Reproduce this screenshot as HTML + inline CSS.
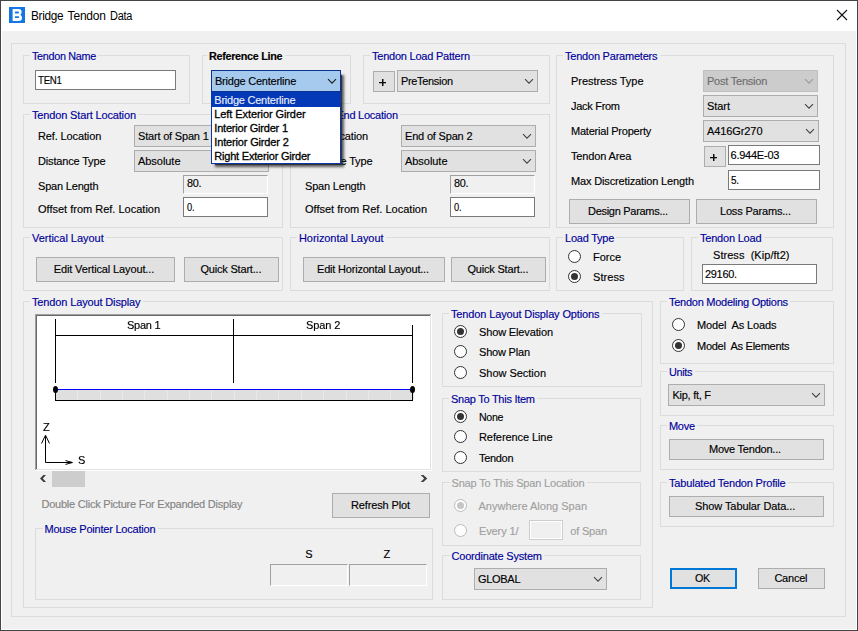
<!DOCTYPE html>
<html><head><meta charset="utf-8"><title>Bridge Tendon Data</title>
<style>
html,body{margin:0;padding:0;}
body{width:858px;height:631px;overflow:hidden;background:#f0f0f0;font-family:"Liberation Sans",sans-serif;font-size:11px;position:relative;}
#w{position:absolute;left:0;top:0;width:858px;height:631px;overflow:hidden;background:#f0f0f0;}
#w div,#w span,#w svg,#w i{position:absolute;box-sizing:content-box;}
.t{white-space:pre;font-family:"Liberation Sans",sans-serif;-webkit-text-stroke:0.15px currentColor;}
.g{border:1px solid #dcdcdc;}
.gp{height:5px;background:#f0f0f0;}
.cb{background:#e1e1e1;border:1px solid #adadad;}
.cbd{background:#cccccc;border-color:#bfbfbf;}
.cba{background:#a5caee;border-color:#0b3193;}
.bt{background:#e1e1e1;border:1px solid #adadad;}
.btd{border:2px solid #0078d7;}
.tb{background:#fff;border:1px solid #7a7a7a;}
.tbr{background:#f0f0f0;border:1px solid;border-color:#a0a0a0 #fff #fff #a0a0a0;}
.tbx{background:#f0f0f0;border:1px solid #cdcdcd;box-shadow:inset 0 0 0 1px #fff;}
.rd{width:11px;height:11px;border:1px solid #333;border-radius:50%;background:#fff;}
.rd i{left:2px;top:2px;width:7px;height:7px;border-radius:50%;background:#333;}
.rdd{border-color:#bcbcbc;background:#fdfdfd;}
.rdd i{background:#c6c6c6;}
.ln{background:#000;}
</style></head><body><div id="w">
<div style="left:0;top:0;width:858px;height:31px;background:#fff"></div>
<div style="left:9px;top:7px;width:16px;height:16px;background:#1476e3"></div>
<svg class="a" style="left:9px;top:7px" width="16" height="16" viewBox="0 0 16 16"><path fill="#fff" fill-rule="evenodd" d="M3.6 2H9.8Q12.6 2 12.6 5Q12.6 7 11.4 7.700Q13 8.500 13 10.700Q13 14 9.800 14H3.600ZM6 4.500H9Q10 4.500 10 5.450Q10 6.400 9 6.400H6ZM6 9.200H9.300Q10.200 9.200 10.200 10.050Q10.200 10.900 9.300 10.900H6Z"/></svg>
<span class="t" style="left:30.6px;top:9px;font-size:12px;line-height:14px;color:#000;letter-spacing:-0.300px;transform:scaleX(0.9823);transform-origin:0 0;-webkit-text-stroke:0;">Bridge</span>
<span class="t" style="left:67.6px;top:9px;font-size:12px;line-height:14px;color:#000;letter-spacing:-0.193px;-webkit-text-stroke:0;">Tendon</span>
<span class="t" style="left:110.2px;top:9px;font-size:12px;line-height:14px;color:#000;letter-spacing:-0.300px;transform:scaleX(0.9122);transform-origin:0 0;-webkit-text-stroke:0;">Data</span>
<svg class="a" style="left:836px;top:9px" width="12" height="12" viewBox="0 0 12 12"><path d="M1 1 L11 11 M11 1 L1 11" stroke="#111" stroke-width="1.1" fill="none"/></svg>
<div class="g" style="left:11px;top:43px;width:833px;height:572px"></div>
<div class="g" style="left:23px;top:55px;width:165px;height:47px"></div>
<div class="gp" style="left:30px;top:54px;width:68.25px"></div>
<span class="t" style="left:32px;top:50px;font-size:11px;line-height:13px;color:#00009b;letter-spacing:-0.300px;transform:scaleX(0.9812);transform-origin:0 0;">Tendon Name</span>
<div class="tb" style="left:35px;top:70px;width:139px;height:18px"></div>
<span class="t" style="left:38px;top:74px;font-size:11px;line-height:13px;color:#000;letter-spacing:-0.300px;transform:scaleX(0.8818);transform-origin:0 0;">TEN1</span>
<div class="g" style="left:363px;top:55px;width:185px;height:47px"></div>
<div class="gp" style="left:370px;top:54px;width:102px"></div>
<span class="t" style="left:372px;top:50px;font-size:11px;line-height:13px;color:#00009b;letter-spacing:-0.230px;">Tendon Load Pattern</span>
<div class="bt" style="left:373px;top:71px;width:20px;height:19px"></div>
<div style="left:379px;top:82px;width:7px;height:1px;background:#0c0c0c"></div>
<div style="left:382px;top:79px;width:1px;height:7px;background:#0c0c0c"></div>
<div style="left:383px;top:79px;width:1px;height:7px;background:rgba(0,0,0,.45)"></div>
<div style="left:379px;top:83px;width:7px;height:1px;background:rgba(0,0,0,.25)"></div>
<div class="cb" style="left:397px;top:70px;width:139px;height:20px"></div>
<span class="t" style="left:401px;top:75px;font-size:11px;line-height:13px;color:#000;letter-spacing:-0.300px;transform:scaleX(0.9937);transform-origin:0 0;">PreTension</span>
<svg class="a" style="left:524px;top:78.1px" width="10" height="7" viewBox="0 0 10 7"><path d="M1 1.2 L5 5.2 L9 1.2" fill="none" stroke="#404040" stroke-width="1.05"/></svg>
<div class="g" style="left:556px;top:55px;width:276px;height:171px"></div>
<div class="gp" style="left:563px;top:54px;width:96.5px"></div>
<span class="t" style="left:565px;top:50px;font-size:11px;line-height:13px;color:#00009b;letter-spacing:-0.218px;">Tendon Parameters</span>
<span class="t" style="left:571px;top:75px;font-size:11px;line-height:13px;color:#000;letter-spacing:-0.051px;">Prestress Type</span>
<span class="t" style="left:571px;top:100px;font-size:11px;line-height:13px;color:#000;letter-spacing:-0.292px;">Jack From</span>
<span class="t" style="left:571px;top:125px;font-size:11px;line-height:13px;color:#000;letter-spacing:-0.219px;">Material Property</span>
<span class="t" style="left:571px;top:150px;font-size:11px;line-height:13px;color:#000;letter-spacing:-0.152px;">Tendon Area</span>
<span class="t" style="left:571px;top:175px;font-size:11px;line-height:13px;color:#000;letter-spacing:-0.148px;">Max Discretization Length</span>
<div class="cb cbd" style="left:703px;top:70px;width:113px;height:20px"></div>
<span class="t" style="left:707px;top:75px;font-size:11px;line-height:13px;color:#6d6d6d;letter-spacing:-0.230px;">Post Tension</span>
<svg class="a" style="left:804px;top:78.1px" width="10" height="7" viewBox="0 0 10 7"><path d="M1 1.2 L5 5.2 L9 1.2" fill="none" stroke="#9a9a9a" stroke-width="1.05"/></svg>
<div class="cb" style="left:703px;top:95px;width:113px;height:20px"></div>
<span class="t" style="left:707px;top:100px;font-size:11px;line-height:13px;color:#000;letter-spacing:-0.057px;">Start</span>
<svg class="a" style="left:804px;top:103.1px" width="10" height="7" viewBox="0 0 10 7"><path d="M1 1.2 L5 5.2 L9 1.2" fill="none" stroke="#404040" stroke-width="1.05"/></svg>
<div class="cb" style="left:703px;top:120px;width:114px;height:20px"></div>
<span class="t" style="left:707px;top:125px;font-size:11px;line-height:13px;color:#000;letter-spacing:-0.095px;">A416Gr270</span>
<svg class="a" style="left:805px;top:128.1px" width="10" height="7" viewBox="0 0 10 7"><path d="M1 1.2 L5 5.2 L9 1.2" fill="none" stroke="#404040" stroke-width="1.05"/></svg>
<div class="bt" style="left:704px;top:146px;width:20px;height:19px"></div>
<div style="left:710px;top:157px;width:7px;height:1px;background:#0c0c0c"></div>
<div style="left:713px;top:154px;width:1px;height:7px;background:#0c0c0c"></div>
<div style="left:714px;top:154px;width:1px;height:7px;background:rgba(0,0,0,.45)"></div>
<div style="left:710px;top:158px;width:7px;height:1px;background:rgba(0,0,0,.25)"></div>
<div class="tb" style="left:728px;top:145px;width:90px;height:18px"></div>
<span class="t" style="left:730.5px;top:149px;font-size:11px;line-height:13px;color:#000;letter-spacing:-0.232px;">6.944E-03</span>
<div class="tb" style="left:728px;top:170px;width:90px;height:18px"></div>
<span class="t" style="left:731px;top:174px;font-size:11px;line-height:13px;color:#000;letter-spacing:-0.300px;transform:scaleX(0.9016);transform-origin:0 0;">5.</span>
<div class="bt" style="left:569px;top:199px;width:119px;height:23px"></div>
<span class="t" style="left:588px;top:205px;font-size:11px;line-height:13px;color:#000;letter-spacing:-0.291px;">Design Params...</span>
<div class="bt" style="left:696px;top:199px;width:119px;height:23px"></div>
<span class="t" style="left:720px;top:205px;font-size:11px;line-height:13px;color:#000;letter-spacing:-0.181px;">Loss Params...</span>
<div class="g" style="left:23px;top:114px;width:258px;height:112px"></div>
<div class="gp" style="left:30px;top:113px;width:108px"></div>
<span class="t" style="left:32px;top:109px;font-size:11px;line-height:13px;color:#00009b;letter-spacing:-0.151px;">Tendon Start Location</span>
<span class="t" style="left:38px;top:130px;font-size:11px;line-height:13px;color:#000;letter-spacing:-0.130px;">Ref. Location</span>
<span class="t" style="left:38px;top:155px;font-size:11px;line-height:13px;color:#000;letter-spacing:-0.167px;">Distance Type</span>
<span class="t" style="left:38px;top:180px;font-size:11px;line-height:13px;color:#000;letter-spacing:-0.189px;">Span Length</span>
<span class="t" style="left:38px;top:203px;font-size:11px;line-height:13px;color:#000;">Offset from Ref. Location</span>
<div class="cb" style="left:134px;top:125px;width:133px;height:20px"></div>
<span class="t" style="left:138px;top:130px;font-size:11px;line-height:13px;color:#000;letter-spacing:-0.188px;">Start of Span 1</span>
<svg class="a" style="left:255px;top:133.1px" width="10" height="7" viewBox="0 0 10 7"><path d="M1 1.2 L5 5.2 L9 1.2" fill="none" stroke="#404040" stroke-width="1.05"/></svg>
<div class="cb" style="left:134px;top:150px;width:133px;height:20px"></div>
<span class="t" style="left:138px;top:155px;font-size:11px;line-height:13px;color:#000;letter-spacing:-0.044px;">Absolute</span>
<svg class="a" style="left:255px;top:158.1px" width="10" height="7" viewBox="0 0 10 7"><path d="M1 1.2 L5 5.2 L9 1.2" fill="none" stroke="#404040" stroke-width="1.05"/></svg>
<div class="tbr" style="left:183px;top:175px;width:83px;height:17px"></div>
<span class="t" style="left:187px;top:177px;font-size:11px;line-height:13px;color:#000;letter-spacing:-0.300px;transform:scaleX(0.9870);transform-origin:0 0;">80.</span>
<div class="tb" style="left:183px;top:197px;width:83px;height:18px"></div>
<span class="t" style="left:186.5px;top:201px;font-size:11px;line-height:13px;color:#000;letter-spacing:-0.300px;transform:scaleX(0.8452);transform-origin:0 0;">0.</span>
<div class="g" style="left:290px;top:114px;width:258px;height:112px"></div>
<div class="gp" style="left:297px;top:113px;width:103px"></div>
<span class="t" style="left:299px;top:109px;font-size:11px;line-height:13px;color:#00009b;letter-spacing:-0.242px;">Tendon End Location</span>
<span class="t" style="left:305px;top:130px;font-size:11px;line-height:13px;color:#000;letter-spacing:-0.151px;">Ref. Location</span>
<span class="t" style="left:305px;top:155px;font-size:11px;line-height:13px;color:#000;letter-spacing:-0.167px;">Distance Type</span>
<span class="t" style="left:305px;top:180px;font-size:11px;line-height:13px;color:#000;letter-spacing:-0.189px;">Span Length</span>
<span class="t" style="left:305px;top:203px;font-size:11px;line-height:13px;color:#000;">Offset from Ref. Location</span>
<div class="cb" style="left:401px;top:125px;width:133px;height:20px"></div>
<span class="t" style="left:405px;top:130px;font-size:11px;line-height:13px;color:#000;letter-spacing:-0.185px;">End of Span 2</span>
<svg class="a" style="left:522px;top:133.1px" width="10" height="7" viewBox="0 0 10 7"><path d="M1 1.2 L5 5.2 L9 1.2" fill="none" stroke="#404040" stroke-width="1.05"/></svg>
<div class="cb" style="left:401px;top:150px;width:133px;height:20px"></div>
<span class="t" style="left:405px;top:155px;font-size:11px;line-height:13px;color:#000;letter-spacing:-0.044px;">Absolute</span>
<svg class="a" style="left:522px;top:158.1px" width="10" height="7" viewBox="0 0 10 7"><path d="M1 1.2 L5 5.2 L9 1.2" fill="none" stroke="#404040" stroke-width="1.05"/></svg>
<div class="tbr" style="left:450px;top:175px;width:83px;height:17px"></div>
<span class="t" style="left:454px;top:177px;font-size:11px;line-height:13px;color:#000;letter-spacing:-0.300px;transform:scaleX(0.9870);transform-origin:0 0;">80.</span>
<div class="tb" style="left:450px;top:197px;width:83px;height:18px"></div>
<span class="t" style="left:453.5px;top:201px;font-size:11px;line-height:13px;color:#000;letter-spacing:-0.300px;transform:scaleX(0.8452);transform-origin:0 0;">0.</span>
<div class="g" style="left:23px;top:237px;width:258px;height:52px"></div>
<div class="gp" style="left:30px;top:236px;width:75.75px"></div>
<span class="t" style="left:32px;top:232px;font-size:11px;line-height:13px;color:#00009b;letter-spacing:-0.029px;">Vertical Layout</span>
<div class="bt" style="left:36px;top:257px;width:137px;height:23px"></div>
<span class="t" style="left:53.75px;top:263px;font-size:11px;line-height:13px;color:#000;letter-spacing:-0.129px;">Edit Vertical Layout...</span>
<div class="bt" style="left:184px;top:257px;width:93px;height:23px"></div>
<span class="t" style="left:200.5px;top:263px;font-size:11px;line-height:13px;color:#000;letter-spacing:-0.198px;">Quick Start...</span>
<div class="g" style="left:290px;top:237px;width:258px;height:52px"></div>
<div class="gp" style="left:297px;top:236px;width:88.5px"></div>
<span class="t" style="left:299px;top:232px;font-size:11px;line-height:13px;color:#00009b;letter-spacing:-0.069px;">Horizontal Layout</span>
<div class="bt" style="left:303px;top:257px;width:140px;height:23px"></div>
<span class="t" style="left:317px;top:263px;font-size:11px;line-height:13px;color:#000;letter-spacing:-0.199px;">Edit Horizontal Layout...</span>
<div class="bt" style="left:451px;top:257px;width:93px;height:23px"></div>
<span class="t" style="left:467.5px;top:263px;font-size:11px;line-height:13px;color:#000;letter-spacing:-0.198px;">Quick Start...</span>
<div class="g" style="left:556px;top:237px;width:126px;height:52px"></div>
<div class="gp" style="left:563px;top:236px;width:53.25px"></div>
<span class="t" style="left:565px;top:232px;font-size:11px;line-height:13px;color:#00009b;letter-spacing:-0.240px;">Load Type</span>
<div class="rd" style="left:568px;top:250px"></div>
<span class="t" style="left:593px;top:251px;font-size:11px;line-height:13px;color:#000;letter-spacing:-0.029px;">Force</span>
<div class="rd" style="left:568px;top:270px"><i></i></div>
<span class="t" style="left:593px;top:271px;font-size:11px;line-height:13px;color:#000;letter-spacing:0.085px;">Stress</span>
<div class="g" style="left:691px;top:237px;width:140px;height:52px"></div>
<div class="gp" style="left:698px;top:236px;width:65.5px"></div>
<span class="t" style="left:700px;top:232px;font-size:11px;line-height:13px;color:#00009b;letter-spacing:-0.211px;">Tendon Load</span>
<span class="t" style="left:713px;top:249px;font-size:11px;line-height:13px;color:#000;letter-spacing:0.044px;">Stress  (Kip/ft2)</span>
<div class="tb" style="left:702px;top:264px;width:113px;height:18px"></div>
<span class="t" style="left:705px;top:268px;font-size:11px;line-height:13px;color:#000;letter-spacing:-0.300px;transform:scaleX(0.9956);transform-origin:0 0;">29160.</span>
<div class="g" style="left:23px;top:301px;width:628px;height:305px"></div>
<div class="gp" style="left:30px;top:300px;width:112.5px"></div>
<span class="t" style="left:32px;top:296px;font-size:11px;line-height:13px;color:#00009b;letter-spacing:-0.139px;">Tendon Layout Display</span>
<div style="left:35px;top:314px;width:397px;height:157px;background:#fff"></div>
<div style="left:35px;top:314px;width:396px;height:1px;background:#a0a0a0"></div>
<div style="left:35px;top:314px;width:1px;height:156px;background:#a0a0a0"></div>
<div style="left:36px;top:315px;width:394px;height:1px;background:#696969"></div>
<div style="left:36px;top:315px;width:1px;height:154px;background:#696969"></div>
<div style="left:36px;top:469px;width:395px;height:1px;background:#e3e3e3"></div>
<div style="left:430px;top:315px;width:1px;height:155px;background:#e3e3e3"></div>
<div class="ln" style="left:55px;top:319px;width:1px;height:64px"></div>
<div class="ln" style="left:233px;top:319px;width:1px;height:64px"></div>
<div class="ln" style="left:412px;top:325px;width:1px;height:58px"></div>
<div class="ln" style="left:55px;top:335px;width:358px;height:1px"></div>
<span class="t" style="left:127px;top:319px;font-size:11px;line-height:13px;color:#000;letter-spacing:-0.272px;-webkit-text-stroke:0.15px;will-change:transform;">Span 1</span>
<span class="t" style="left:306px;top:319px;font-size:11px;line-height:13px;color:#000;letter-spacing:-0.112px;-webkit-text-stroke:0.15px;will-change:transform;">Span 2</span>
<div style="left:55px;top:390px;width:356px;height:10px;background:#dfdfdf;border:1px solid #000;border-top:none"></div>
<div style="left:77px;top:390px;width:1px;height:10px;background:#e9e9e9"></div>
<div style="left:100px;top:390px;width:1px;height:10px;background:#e9e9e9"></div>
<div style="left:122px;top:390px;width:1px;height:10px;background:#e9e9e9"></div>
<div style="left:144px;top:390px;width:1px;height:10px;background:#e9e9e9"></div>
<div style="left:167px;top:390px;width:1px;height:10px;background:#e9e9e9"></div>
<div style="left:189px;top:390px;width:1px;height:10px;background:#e9e9e9"></div>
<div style="left:211px;top:390px;width:1px;height:10px;background:#e9e9e9"></div>
<div style="left:234px;top:390px;width:1px;height:10px;background:#e9e9e9"></div>
<div style="left:256px;top:390px;width:1px;height:10px;background:#e9e9e9"></div>
<div style="left:278px;top:390px;width:1px;height:10px;background:#e9e9e9"></div>
<div style="left:301px;top:390px;width:1px;height:10px;background:#e9e9e9"></div>
<div style="left:323px;top:390px;width:1px;height:10px;background:#e9e9e9"></div>
<div style="left:346px;top:390px;width:1px;height:10px;background:#e9e9e9"></div>
<div style="left:368px;top:390px;width:1px;height:10px;background:#e9e9e9"></div>
<div style="left:390px;top:390px;width:1px;height:10px;background:#e9e9e9"></div>
<div style="left:413px;top:390px;width:1px;height:10px;background:#e9e9e9"></div>
<div style="left:55px;top:389px;width:358px;height:1px;background:#0000ff"></div>
<div style="left:53px;top:386px;width:5px;height:7px;border-radius:50%;background:#000"></div>
<div style="left:410px;top:386px;width:5px;height:7px;border-radius:50%;background:#000"></div>
<span class="t" style="left:42.6px;top:421px;font-size:11px;line-height:13px;color:#000;-webkit-text-stroke:0.15px;will-change:transform;">Z</span>
<span class="t" style="left:78.1px;top:454px;font-size:11px;line-height:13px;color:#000;-webkit-text-stroke:0.15px;will-change:transform;">S</span>
<svg class="a" style="left:38px;top:432px" width="40" height="36" viewBox="0 0 40 36"><path d="M7.5 4 V30.5 H34 M3.5 11.5 L7.5 3.2 L11.5 11.5 M27.5 28.6 L34.5 30.5 L27.5 32.4" fill="none" stroke="#000" stroke-width="1"/></svg>
<div style="left:52px;top:471px;width:33px;height:16px;background:#cdcdcd"></div>
<svg class="a" style="left:39px;top:474px" width="8" height="10" viewBox="0 0 8 10"><path d="M7 .9L4.400 .9L1 4.450L4.400 8L7 8L3.800 4.450Z" fill="#3e3e3e"/></svg>
<svg class="a" style="left:420px;top:474px" width="8" height="10" viewBox="0 0 8 10"><path d="M.7 .9L3.400 .9L7.300 4.450L3.400 8L.7 8L4.200 4.450Z" fill="#3e3e3e"/></svg>
<span class="t" style="left:41.5px;top:498px;font-size:11px;line-height:13px;color:#848484;letter-spacing:-0.233px;">Double Click Picture For Expanded Display</span>
<div class="bt" style="left:332px;top:493px;width:96px;height:23px"></div>
<span class="t" style="left:351px;top:499px;font-size:11px;line-height:13px;color:#000;letter-spacing:-0.139px;">Refresh Plot</span>
<div class="g" style="left:35px;top:528px;width:396px;height:70px"></div>
<div class="gp" style="left:42.5px;top:527px;width:115px"></div>
<span class="t" style="left:44.5px;top:523px;font-size:11px;line-height:13px;color:#00009b;letter-spacing:-0.217px;">Mouse Pointer Location</span>
<span class="t" style="left:305.3px;top:548px;font-size:11px;line-height:13px;color:#000;">S</span>
<span class="t" style="left:383.5px;top:548px;font-size:11px;line-height:13px;color:#000;">Z</span>
<div class="tbr" style="left:270px;top:564px;width:76px;height:20px"></div>
<div class="tbr" style="left:349px;top:564px;width:76px;height:20px"></div>
<div class="g" style="left:442px;top:313px;width:198px;height:72px"></div>
<div class="gp" style="left:449px;top:312px;width:152.5px"></div>
<span class="t" style="left:451px;top:308px;font-size:11px;line-height:13px;color:#00009b;letter-spacing:-0.134px;">Tendon Layout Display Options</span>
<div class="rd" style="left:454px;top:325px"><i></i></div>
<span class="t" style="left:479px;top:326px;font-size:11px;line-height:13px;color:#000;letter-spacing:-0.140px;">Show Elevation</span>
<div class="rd" style="left:454px;top:345px"></div>
<span class="t" style="left:479px;top:346px;font-size:11px;line-height:13px;color:#000;letter-spacing:-0.198px;">Show Plan</span>
<div class="rd" style="left:454px;top:366px"></div>
<span class="t" style="left:479px;top:367px;font-size:11px;line-height:13px;color:#000;letter-spacing:-0.024px;">Show Section</span>
<div class="g" style="left:442px;top:398px;width:197px;height:72px"></div>
<div class="gp" style="left:449px;top:397px;width:88px"></div>
<span class="t" style="left:451px;top:393px;font-size:11px;line-height:13px;color:#00009b;letter-spacing:-0.266px;">Snap To This Item</span>
<div class="rd" style="left:454px;top:410px"><i></i></div>
<span class="t" style="left:479px;top:411px;font-size:11px;line-height:13px;color:#000;letter-spacing:-0.300px;transform:scaleX(0.9647);transform-origin:0 0;">None</span>
<div class="rd" style="left:454px;top:430px"></div>
<span class="t" style="left:479px;top:431px;font-size:11px;line-height:13px;color:#000;letter-spacing:-0.085px;">Reference Line</span>
<div class="rd" style="left:454px;top:451px"></div>
<span class="t" style="left:479px;top:452px;font-size:11px;line-height:13px;color:#000;letter-spacing:-0.300px;transform:scaleX(0.9975);transform-origin:0 0;">Tendon</span>
<div class="g" style="left:442px;top:482px;width:197px;height:62px"></div>
<div class="gp" style="left:449.5px;top:481px;width:137px"></div>
<span class="t" style="left:451.5px;top:477px;font-size:11px;line-height:13px;color:#a0a0a0;letter-spacing:-0.168px;">Snap To This Span Location</span>
<div class="rd rdd" style="left:454px;top:499px"><i></i></div>
<span class="t" style="left:478.5px;top:500px;font-size:11px;line-height:13px;color:#a0a0a0;letter-spacing:0.014px;">Anywhere Along Span</span>
<div class="rd rdd" style="left:454px;top:524px"></div>
<span class="t" style="left:479px;top:525px;font-size:11px;line-height:13px;color:#a0a0a0;letter-spacing:-0.121px;">Every 1/</span>
<div class="tbx" style="left:529px;top:520px;width:32px;height:18px"></div>
<span class="t" style="left:570.3px;top:525px;font-size:11px;line-height:13px;color:#a0a0a0;letter-spacing:-0.203px;">of Span</span>
<div class="g" style="left:442px;top:555px;width:197px;height:43px"></div>
<div class="gp" style="left:449.5px;top:554px;width:94.5px"></div>
<span class="t" style="left:451.5px;top:550px;font-size:11px;line-height:13px;color:#00009b;letter-spacing:-0.190px;">Coordinate System</span>
<div class="cb" style="left:474px;top:568px;width:131px;height:20px"></div>
<span class="t" style="left:478px;top:573px;font-size:11px;line-height:13px;color:#000;letter-spacing:-0.300px;">GLOBAL</span>
<svg class="a" style="left:593px;top:576.1px" width="10" height="7" viewBox="0 0 10 7"><path d="M1 1.2 L5 5.2 L9 1.2" fill="none" stroke="#404040" stroke-width="1.05"/></svg>
<div class="g" style="left:660px;top:301px;width:172px;height:61px"></div>
<div class="gp" style="left:667px;top:300px;width:123px"></div>
<span class="t" style="left:669px;top:296px;font-size:11px;line-height:13px;color:#00009b;letter-spacing:-0.261px;">Tendon Modeling Options</span>
<div class="rd" style="left:672px;top:318px"></div>
<span class="t" style="left:697px;top:319px;font-size:11px;line-height:13px;color:#000;letter-spacing:-0.130px;">Model  As Loads</span>
<div class="rd" style="left:672px;top:339px"><i></i></div>
<span class="t" style="left:697px;top:340px;font-size:11px;line-height:13px;color:#000;letter-spacing:-0.277px;">Model  As Elements</span>
<div class="g" style="left:660px;top:371px;width:172px;height:43px"></div>
<div class="gp" style="left:667px;top:370px;width:27.5px"></div>
<span class="t" style="left:669px;top:366px;font-size:11px;line-height:13px;color:#00009b;letter-spacing:-0.300px;transform:scaleX(0.9849);transform-origin:0 0;">Units</span>
<div class="cb" style="left:668px;top:384px;width:155px;height:20px"></div>
<span class="t" style="left:672.5px;top:389px;font-size:11px;line-height:13px;color:#000;letter-spacing:-0.273px;">Kip, ft, F</span>
<svg class="a" style="left:811px;top:392.1px" width="10" height="7" viewBox="0 0 10 7"><path d="M1 1.2 L5 5.2 L9 1.2" fill="none" stroke="#404040" stroke-width="1.05"/></svg>
<div class="g" style="left:660px;top:425px;width:172px;height:43px"></div>
<div class="gp" style="left:667px;top:424px;width:30px"></div>
<span class="t" style="left:669px;top:420px;font-size:11px;line-height:13px;color:#00009b;letter-spacing:-0.299px;">Move</span>
<div class="bt" style="left:669px;top:439px;width:153px;height:19px"></div>
<span class="t" style="left:709px;top:443px;font-size:11px;line-height:13px;color:#000;letter-spacing:-0.231px;">Move Tendon...</span>
<div class="g" style="left:660px;top:482px;width:172px;height:43px"></div>
<div class="gp" style="left:667px;top:481px;width:120.7px"></div>
<span class="t" style="left:669px;top:477px;font-size:11px;line-height:13px;color:#00009b;letter-spacing:-0.182px;">Tabulated Tendon Profile</span>
<div class="bt" style="left:669px;top:496px;width:153px;height:19px"></div>
<span class="t" style="left:695px;top:500px;font-size:11px;line-height:13px;color:#000;letter-spacing:-0.085px;">Show Tabular Data...</span>
<div class="bt btd" style="left:670px;top:568px;width:63px;height:17px"></div>
<span class="t" style="left:695px;top:572px;font-size:11px;line-height:13px;color:#000;letter-spacing:-0.300px;transform:scaleX(0.9683);transform-origin:0 0;">OK</span>
<div class="bt" style="left:758px;top:568px;width:65px;height:19px"></div>
<span class="t" style="left:774.4px;top:572px;font-size:11px;line-height:13px;color:#000;letter-spacing:-0.228px;">Cancel</span>
<div class="g" style="left:202px;top:55px;width:147px;height:47px"></div>
<div class="gp" style="left:207px;top:54px;width:77.5px"></div>
<span class="t" style="left:209px;top:50px;font-size:11px;line-height:13px;color:#000;letter-spacing:-0.300px;font-weight:bold;transform:scaleX(0.9805);transform-origin:0 0;">Reference Line</span>
<div style="left:215px;top:75px;width:127px;height:90px;box-shadow:1px 1px 2.5px 1px rgba(0,0,0,.62);background:#333"></div>
<div style="left:211px;top:92px;width:128px;height:70px;background:#fff;border:1px solid #0a36a8"></div>
<div style="left:212px;top:92px;width:128px;height:15px;background:#0338b6"></div>
<span class="t" style="left:214.3px;top:94px;font-size:11px;line-height:13px;color:#e8eefc;letter-spacing:-0.237px;">Bridge Centerline</span>
<span class="t" style="left:214.3px;top:108px;font-size:11px;line-height:13px;color:#000;letter-spacing:-0.085px;-webkit-text-stroke:0.3px;">Left Exterior Girder</span>
<span class="t" style="left:214.3px;top:122px;font-size:11px;line-height:13px;color:#000;letter-spacing:-0.208px;-webkit-text-stroke:0.3px;">Interior Girder 1</span>
<span class="t" style="left:214.3px;top:136px;font-size:11px;line-height:13px;color:#000;letter-spacing:-0.161px;-webkit-text-stroke:0.3px;">Interior Girder 2</span>
<span class="t" style="left:214.3px;top:150px;font-size:11px;line-height:13px;color:#000;letter-spacing:-0.202px;-webkit-text-stroke:0.3px;">Right Exterior Girder</span>
<div class="cb cba" style="left:211px;top:70px;width:128px;height:20px"></div>
<span class="t" style="left:215px;top:75px;font-size:11px;line-height:13px;color:#000;letter-spacing:-0.234px;">Bridge Centerline</span>
<svg class="a" style="left:327px;top:78.1px" width="10" height="7" viewBox="0 0 10 7"><path d="M1 1.2 L5 5.2 L9 1.2" fill="none" stroke="#1c1c1c" stroke-width="1.05"/></svg>
<div style="left:1px;top:1px;width:1px;height:629px;background:#fff"></div>
<div style="left:856px;top:1px;width:1px;height:629px;background:#fff"></div>
<div style="left:1px;top:629px;width:856px;height:1px;background:#fff"></div>
<div style="left:0;top:0;width:858px;height:1px;background:#444"></div>
<div style="left:0;top:0;width:1px;height:631px;background:#444"></div>
<div style="left:857px;top:0;width:1px;height:631px;background:#444"></div>
<div style="left:0;top:630px;width:858px;height:1px;background:#444"></div>
</div></body></html>
